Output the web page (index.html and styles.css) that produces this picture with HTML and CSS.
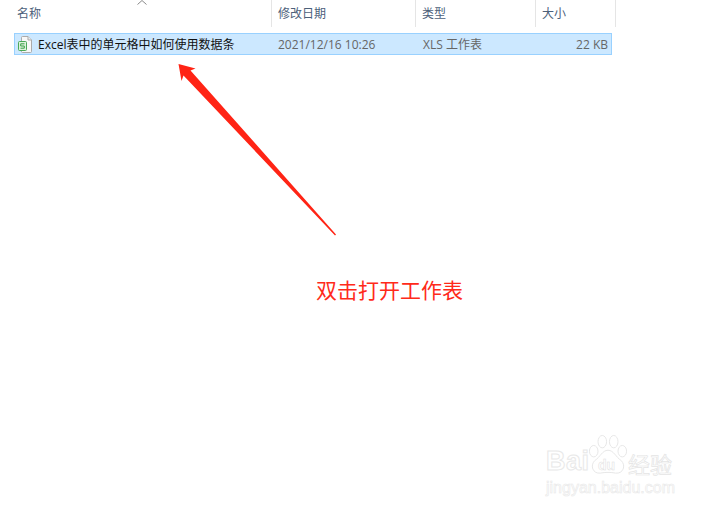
FILE: index.html
```html
<!DOCTYPE html>
<html lang="zh-CN">
<head>
<meta charset="UTF-8">
<meta name="viewport" content="width=device-width, initial-scale=1.0">
<link rel="stylesheet" href="styles.css">
<title>双击打开工作表</title>
</head>

<body>

  <div class="list-head">
    <div class="col col-name">名称
      <svg class="sort-up" width="10" height="5" viewBox="0 0 10 5"><path d="M0.5 4.5 L5 0.5 L9.5 4.5" fill="none" stroke="#8a8a8a"/></svg>
    </div>
    <div class="col col-date">修改日期</div>
    <div class="col col-type">类型</div>
    <div class="col col-size">大小</div>
  </div>

  <div class="file-row">
    <div class="cell-name">
      <svg class="file-icon" width="14" height="17" viewBox="0 0 14 17">
        <path d="M3.5 1.5 Q3.5 0.5 4.5 0.5 H10 L13.5 4 V15.5 Q13.5 16.5 12.5 16.5 H4.5 Q3.5 16.5 3.5 15.5 Z" fill="#f8f8f8" stroke="#ababab"/>
        <path d="M10 0.5 V4 H13.5" fill="#ececec" stroke="#ababab"/>
        <rect x="0.5" y="5.5" width="8" height="9" rx="1" fill="#dcf2dc" stroke="#4aa957"/>
        <path d="M6.5 7.8 H2.7 V10 H6.3 V12.2 H2.5" fill="none" stroke="#3c9f49"/>
      </svg>
      <span class="file-name">Excel表中的单元格中如何使用数据条</span>
    </div>
    <div class="cell-date">2021/12/16 10:26</div>
    <div class="cell-type">XLS 工作表</div>
    <div class="cell-size">22 KB</div>
  </div>

  <!-- 红色箭头和说明文字 -->
  <svg class="arrow" width="713" height="511" viewBox="0 0 713 511">
    <path d="M178.5 64 L195.5 68.5 L190.5 70.5 L336 234.5 L335 235.5 L183.5 75.5 L181.5 81 Z" fill="#ff2415"/>
  </svg>
  <div class="note">双击打开工作表</div>

  <!-- 水印 -->
  <div class="watermark">
    <div class="wm-top">
      <span class="wm-bai">Bai</span>
      <span class="wm-paw">
        <svg width="40" height="42" viewBox="0 0 42 42">
          <g fill="#fff" stroke="#e6e6e6" stroke-width="1">
            <ellipse cx="6" cy="17" rx="4.5" ry="6"/>
            <ellipse cx="15" cy="7" rx="4.5" ry="6.5"/>
            <ellipse cx="27" cy="7" rx="4.5" ry="6.5"/>
            <ellipse cx="36" cy="17" rx="4.5" ry="6"/>
            <path d="M21 16 C27 16 29 23 35 27 C40 32 37 41 29 40 C24 39 18 39 13 40 C5 41 2 32 7 27 C13 23 15 16 21 16 Z"/>
          </g>
        </svg>
        <span class="wm-du">du</span>
      </span>
      <span class="wm-jy">经验</span>
    </div>
    <div class="wm-url">jingyan.baidu.com</div>
  </div>

</body>
</html>
```

FILE: styles.css
```css
html, body {
  margin: 0;
  height: 100%;
}

body {
  position: relative;
  width: 713px;
  height: 511px;
  overflow: hidden;
  background-color: #fff;
  font-family: "Open Sans", "Noto Sans CJK SC", sans-serif;
  font-size: 12px;
  color: #666;
}

/* 表头 */
.list-head {
  display: grid;
  grid-template-columns: 272px 144px 120px 80px;
  height: 27px;
}

.col {
  position: relative;
  padding: 5px 0 0 6px;
  line-height: 17px;
  border-right: 1px solid #e5e5e5;
  color: #4c607a;
}

.col-name {
  padding-left: 17px;
}

.sort-up {
  position: absolute;
  left: 137px;
  top: 0;
}

/* 文件行 */
.file-row {
  display: grid;
  grid-template-columns: 258px 144px 120px 74px;
  align-items: center;
  box-sizing: border-box;
  width: 598px;
  height: 22px;
  margin: 6px 0 0 14px;
  background-color: #cce8ff;
  border: 1px solid #99d1ff;
}

.cell-name {
  display: flex;
  align-items: center;
  padding-left: 3px;
}

.file-icon {
  flex: none;
  margin-right: 6px;
}

.file-name {
  color: #111;
  white-space: nowrap;
}

.cell-date {
  padding-left: 5px;
}

.cell-type {
  padding-left: 6px;
}

.cell-size {
  text-align: right;
  padding-right: 3px;
}

.arrow {
  position: absolute;
  left: 0;
  top: 0;
}

.note {
  position: absolute;
  left: 316px;
  top: 274px;
  font-size: 21px;
  line-height: 30px;
  color: #ff2a1a;
  font-family: "Noto Sans CJK SC", sans-serif;
}

/* 水印 */
.watermark {
  position: absolute;
  left: 546px;
  top: 434px;
  width: 130px;
  color: #fff;
  -webkit-text-stroke: 1px #e8e8e8;
}

.wm-top {
  display: flex;
  align-items: flex-end;
  height: 42px;
}

.wm-bai {
  width: 42px;
  font-family: "Liberation Sans", sans-serif;
  font-size: 27px;
  line-height: 30px;
  font-weight: bold;
  letter-spacing: 0.5px;
}

.wm-paw {
  position: relative;
  width: 40px;
  height: 42px;
}

.wm-du {
  position: absolute;
  left: 10px;
  top: 23px;
  font-family: "Liberation Sans", sans-serif;
  font-size: 14px;
  line-height: 16px;
  font-weight: bold;
  -webkit-text-stroke: 0.5px #e0e0e0;
}

.wm-jy {
  font-family: "Noto Sans CJK SC", sans-serif;
  font-size: 22px;
  line-height: 26px;
  white-space: nowrap;
  -webkit-text-stroke: 0.7px #e4e4e4;
}

.wm-url {
  margin-top: 3px;
  font-family: "Liberation Sans", sans-serif;
  font-size: 16px;
  line-height: 18px;
  white-space: nowrap;
  -webkit-text-stroke: 0.6px #e8e8e8;
}
```
